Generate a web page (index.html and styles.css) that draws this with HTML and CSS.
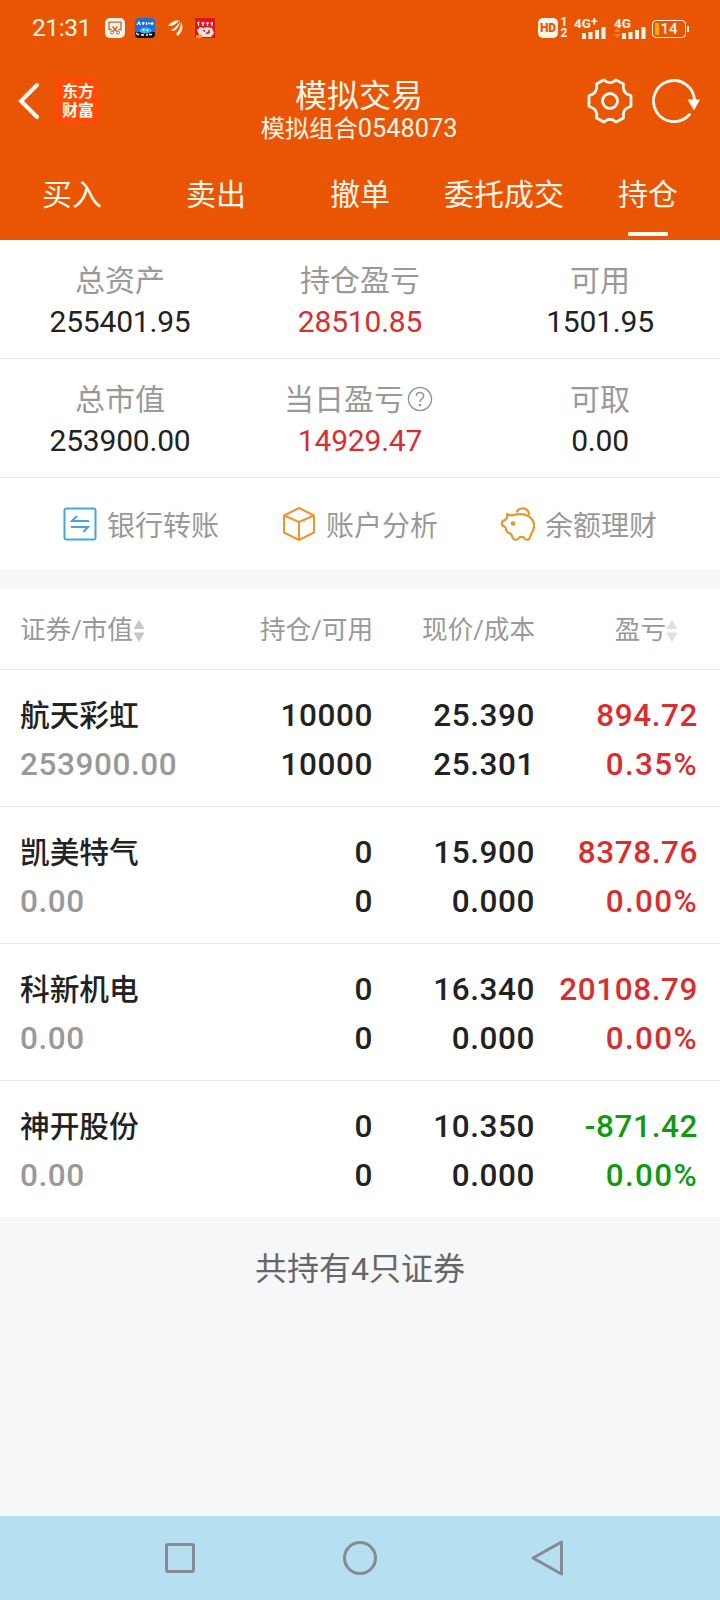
FILE: index.html
```html
<!DOCTYPE html>
<html lang="zh-CN">
  <head>
    <meta charset="utf-8">
    <meta name="viewport" content="width=device-width, initial-scale=1.0">
    <title>模拟交易</title>
    <link rel="stylesheet" href="styles.css">
  </head>
  <body>
    <header class="header">
      <!-- 状态栏 -->
      <div class="status">
        <span class="time">21:31</span>
        <svg class="s-icon" width="20" height="20" viewBox="0 0 20 20">
          <rect width="20" height="20" rx="5" fill="#fff6ea"/>
          <path d="M6.500 11.500H4V4.200H16V11.500H13.500M7.500 8.500l4.500 5M12.500 8.500L8 13.500" fill="none" stroke="#c4622a" stroke-width="1.3"/>
          <circle cx="7" cy="14.500" r="1.500" fill="none" stroke="#c4622a"/>
          <circle cx="13" cy="14.500" r="1.500" fill="none" stroke="#c4622a"/>
        </svg>
        <svg class="s-icon" width="20" height="20" viewBox="0 0 20 20">
          <rect width="20" height="20" rx="4" fill="#1c70d8"/>
          <path d="M0 14h20v2a4 4 0 0 1-4 4H4a4 4 0 0 1-4-4z" fill="#0b1724"/>
          <path d="M2 7l2-3 1.500 3M7 5h2.500M8.300 4v3M11.500 4v3M13 5.500h2M17 4v3M18.500 5.500h-3" stroke="#fff" stroke-width="1.300" fill="none"/>
          <ellipse cx="10.500" cy="12.500" rx="6" ry="3" fill="#3ab4f0"/>
          <circle cx="8.500" cy="12" r="1" fill="#fff"/>
          <circle cx="12.500" cy="12" r="1" fill="#fff"/>
          <path d="M1 15l3 2M6 17h3M11 17h2M14 16.500h3" stroke="#fff" stroke-width="1.500"/>
        </svg>
        <svg class="s-icon" width="20" height="20" viewBox="0 0 20 20">
          <path d="M3 8C6 4 9 2.500 14 2 12 6 8 8.500 3 8zM6 12c4-1.500 7-4.500 9-9.500 0 5-3 9.500-7 10.500zM11 16c3-3 5-7 5-12 3 5 1 10-3 14z" fill="#fff6ea"/>
        </svg>
        <svg class="s-icon" width="20" height="20" viewBox="0 0 20 20">
          <rect width="20" height="20" fill="#e0131e"/>
          <path d="M2 5l2.500-1M3.500 4v4M6.500 5h3M8 4v4M11 5h3M12.500 4v4M15.500 5H18M17 4v4" stroke="#fff" stroke-width="1.200"/>
          <path d="M2 12l3-3 3 1 4-1 5 1 2 5-3 4H5z" fill="#fbdcd8"/>
          <path d="M8 12l2 1.500M14 12v2.500l-3 1" stroke="#b11c28" stroke-width="1.400" fill="none"/>
          <rect x="1" y="17" width="6" height="3" fill="#f39a1c"/>
        </svg>
        <div class="status-right">
          <span class="hd">HD</span>
          <span class="sim"><i>1</i><i>2</i></span>
          <span class="signal signal-plus">
            <b>4G<sup>+</sup></b>
            <svg width="24" height="12" viewBox="0 0 24 12" fill="#fff6ea"><path d="M0 6h4v6H0zM6.500 5h4v7h-4zM13 3h4v9h-4zM19.500 0h4v12h-4z"/></svg>
          </span>
          <span class="signal">
            <b>4G</b>
            <svg width="32" height="12" viewBox="0 0 32 12" fill="#fff6ea"><path d="M0 5l3.500-4L7 5zM0 7l3.500 4L7 7z" fill="#ff7a3a"/><path d="M8 6h4v6H8zM14.500 5h4v7h-4zM21 3h4v9h-4zM27.500 0h4v12h-4z"/></svg>
          </span>
          <span class="battery">14</span>
        </div>
      </div>

      <!-- 标题栏 -->
      <div class="navbar">
        <div class="nav-left">
          <svg width="22" height="38" viewBox="0 0 22 38"><path d="M20 3L4 19l16 16" fill="none" stroke="#fffaf2" stroke-width="4" stroke-linecap="round"/></svg>
          <div class="logo"><span>东方</span><span>财富</span></div>
        </div>
        <div class="nav-title">
          <h1>模拟交易</h1>
          <p>模拟组合<span>0548073</span></p>
        </div>
        <div class="nav-right">
          <svg width="46" height="46" viewBox="0 0 46 46" fill="none" stroke="#fffaf2" stroke-width="2.800" stroke-linejoin="round">
            <path d="M15.500 2.500L17 2q6 5.500 12 0l7.500 4q-1.500 9 6 11l1.500 1v10l-1.500 1q-7.500 2-6 11L29 44q-6-5.500-12 0l-7.500-4q1.500-9-6-11L2 28V18l1.500-1q7.500-2 6-11z"/>
            <circle cx="23" cy="23" r="7.500"/>
          </svg>
          <svg width="48" height="46" viewBox="0 0 48 46">
            <path d="M37.500 36.500A20.500 20.500 0 1 1 42.500 23" fill="none" stroke="#fffaf2" stroke-width="2.800" stroke-linecap="round"/>
            <path d="M35.500 21.500h12.500l-6 11z" fill="#fffaf2"/>
          </svg>
        </div>
      </div>

      <nav class="tabs">
        <a>买入</a>
        <a>卖出</a>
        <a>撤单</a>
        <a>委托成交</a>
        <a class="active">持仓</a>
      </nav>
    </header>

    <!-- 资产概览 -->
    <section class="summary">
      <div class="item"><label>总资产</label><strong>255401.95</strong></div>
      <div class="item"><label>持仓盈亏</label><strong class="red">28510.85</strong></div>
      <div class="item"><label>可用</label><strong>1501.95</strong></div>
    </section>
    <section class="summary">
      <div class="item"><label>总市值</label><strong>253900.00</strong></div>
      <div class="item">
        <label>当日盈亏<svg class="help" width="26" height="26" viewBox="0 0 26 26" fill="none" stroke="#999" stroke-width="1.500"><circle cx="13" cy="13" r="11.500"/><path d="M9.300 10.200c0-5 7.400-4.700 7.400-.4 0 3-3.700 3.200-3.700 6.200"/><circle cx="13" cy="19" r=".6"/></svg></label>
        <strong class="red">14929.47</strong>
      </div>
      <div class="item"><label>可取</label><strong>0.00</strong></div>
    </section>

    <section class="links">
      <a>
        <svg width="34" height="34" viewBox="0 0 34 34" fill="none" stroke="#43a5e4" stroke-width="2">
          <rect x="1.500" y="1.500" width="31" height="31" rx="2"/>
          <path d="M14 9l-5 5h17M8 20h17l-4.500 5"/>
        </svg>
        银行转账
      </a>
      <a>
        <svg width="34" height="34" viewBox="0 0 34 34" fill="none" stroke="#f0952a" stroke-width="2" stroke-linejoin="round">
          <path d="M17 1l15 7.500v17L17 33 2 25.500v-17zM2 8.500l15 6.500 15-6.500M17 15v18"/>
        </svg>
        账户分析
      </a>
      <a>
        <svg width="34" height="34" viewBox="0 0 34 34" fill="none" stroke="#e8962e" stroke-width="2.200" stroke-linejoin="round" stroke-linecap="round">
          <path d="M6 7l5 1.500C18 6.500 24 7 28 9.500c5 3.500 6 9 4 14-1 3-3 4.500-3.500 8-.2 1.500-4.500 1.500-5 0l-1-1.500h-4l-1 1.500c-.5 1.500-5 1.500-5.500 0L10 27l-4-2-1.500-4.500L1 18v-3l4-3 1.500-2z"/>
          <path d="M16 4.500c2-4.500 11-4.500 12 2.500"/>
          <circle cx="12" cy="16.500" r="1.200" fill="#e8962e"/>
        </svg>
        余额理财
      </a>
    </section>

    <!-- 持仓列表 -->
    <main class="holdings">
      <div class="row head">
        <div class="sort">证券/市值<svg width="12" height="24" viewBox="0 0 12 24" fill="#c8c8c8"><path d="M.5 10L6 .5 11.500 10zM.5 13.500L6 23l5.500-9.500z"/></svg></div>
        <div>持仓/可用</div>
        <div>现价/成本</div>
        <div class="sort sort-end">盈亏<svg width="12" height="24" viewBox="0 0 12 24" fill="#dfdfdf"><path d="M.5 10L6 .5 11.500 10zM.5 13.500L6 23l5.500-9.500z"/></svg></div>
      </div>
      <div class="row">
        <div><b>航天彩虹</b><span class="value">253900.00</span></div>
        <div>10000<br>10000</div>
        <div>25.390<br>25.301</div>
        <div class="red">894.72<br><span class="rate">0.35%</span></div>
      </div>
      <div class="row">
        <div><b>凯美特气</b><span class="value">0.00</span></div>
        <div>0<br>0</div>
        <div>15.900<br>0.000</div>
        <div class="red">8378.76<br><span class="rate">0.00%</span></div>
      </div>
      <div class="row">
        <div><b>科新机电</b><span class="value">0.00</span></div>
        <div>0<br>0</div>
        <div>16.340<br>0.000</div>
        <div class="red">20108.79<br><span class="rate">0.00%</span></div>
      </div>
      <div class="row">
        <div><b>神开股份</b><span class="value">0.00</span></div>
        <div>0<br>0</div>
        <div>10.350<br>0.000</div>
        <div class="green">-871.42<br><span class="rate">0.00%</span></div>
      </div>
    </main>
    <p class="total">共持有4只证券</p>

    <!-- 系统导航键 -->
    <footer class="sysbar">
      <svg width="36" height="36" viewBox="0 0 36 36"><rect x="4.500" y="4.500" width="27" height="27" rx="1.500"/></svg>
      <svg width="36" height="36" viewBox="0 0 36 36"><circle cx="18" cy="18" r="15.500"/></svg>
      <svg class="back" width="36" height="36" viewBox="0 0 36 36"><path d="M32.500 2v32L4 18z"/></svg>
    </footer>
  </body>
</html>
```
FILE: styles.css
```css
* {
  box-sizing: border-box;
}
body {
  margin: 0;
  height: 1600px;
  display: flex;
  flex-direction: column;
  background: #f6f7f9;
  color: #222;
  font-family: Roboto, "Noto Sans CJK SC", sans-serif;
}
.red {
  color: #d92e2e;
}
.green {
  color: #109a10;
}

/* 顶部 */
.header {
  height: 240px;
  background: #ea5504;
  color: #fff6ea;
}
.status {
  height: 56px;
  padding: 0 34px 0 32px;
  display: flex;
  align-items: center;
}
.time {
  width: 73px;
  font-size: 24.5px;
  letter-spacing: -0.4px;
  line-height: 56px;
  white-space: nowrap;
}
.s-icon {
  margin-right: 10px;
}
.status-right {
  margin-left: auto;
  display: flex;
  align-items: center;
}
.hd {
  width: 20px;
  height: 20px;
  border-radius: 5px;
  background: #fff6ea;
  color: #ea5504;
  font-size: 12px;
  font-weight: 900;
  line-height: 20px;
  text-align: center;
}
.sim {
  width: 10px;
  margin: 0 5px 0 1px;
  display: flex;
  flex-direction: column;
  text-align: center;
}
.sim i {
  font-size: 12px;
  font-style: normal;
  font-weight: 700;
  line-height: 11px;
}
.signal {
  width: 32px;
  height: 22px;
  display: flex;
  flex-direction: column;
  align-items: flex-end;
}
.signal-plus {
  margin-right: 8px;
}
.signal b {
  align-self: flex-start;
  height: 10px;
  font-size: 13.5px;
  line-height: 12px;
  white-space: nowrap;
}
.signal sup {
  font-size: 12px;
  line-height: 0;
  vertical-align: 2px;
}
.battery {
  position: relative;
  width: 34px;
  height: 18px;
  margin: 2px 0 0 6px;
  border: 1.5px solid #fff6ea;
  border-radius: 4px;
  font-size: 15px;
  font-weight: 500;
  line-height: 16px;
  text-align: center;
}
.battery::before {
  content: "";
  position: absolute;
  left: 2px;
  top: 2px;
  width: 4px;
  height: 12px;
  background: #ffa800;
}
.battery::after {
  content: "";
  position: absolute;
  right: -4px;
  top: 5px;
  width: 2px;
  height: 6px;
  background: #fff6ea;
}

.navbar {
  height: 92px;
  padding: 0 20px 0 17px;
  display: grid;
  grid-template-columns: 130px 1fr 129px;
}
.nav-left {
  display: flex;
  align-items: center;
  gap: 17px;
  padding-bottom: 2px;
}
.logo {
  width: 44px;
  height: 46px;
  display: flex;
  flex-direction: column;
  align-items: center;
  justify-content: center;
  border-radius: 6px;
  background: #ff4a08;
  font-size: 16px;
  font-weight: 700;
  line-height: 19px;
}
.nav-title {
  padding-top: 21px;
  text-align: center;
}
.nav-title h1 {
  margin: 0;
  font-size: 32px;
  font-weight: 400;
  line-height: 38px;
}
.nav-title p {
  margin: 0;
  font-size: 24.3px;
  line-height: 28px;
}
.nav-title span {
  font-size: 25.3px;
}
.nav-right {
  display: flex;
  align-items: center;
  justify-content: flex-end;
  gap: 19px;
  padding-bottom: 2px;
}

.tabs {
  height: 92px;
  padding-top: 1px;
  display: grid;
  grid-template-columns: repeat(5, 1fr);
  text-align: center;
  font-size: 30px;
}
.tabs a {
  line-height: 91px;
}
.tabs .active::after {
  content: "";
  display: block;
  width: 40px;
  height: 4px;
  margin: -8px auto 0;
  border-radius: 1px;
  background: #fffaf2;
}

/* 资产概览 */
.summary {
  height: 119px;
  padding-top: 21px;
  display: grid;
  grid-template-columns: repeat(3, 1fr);
  background: #fff;
  border-bottom: 1px solid #e9e9e9;
}
.item {
  display: flex;
  flex-direction: column;
  align-items: center;
}
.item label {
  display: flex;
  align-items: center;
  height: 40px;
  font-size: 30px;
  line-height: 40px;
  color: #999;
}
.item strong {
  font-size: 30px;
  font-weight: 400;
  letter-spacing: -0.2px;
  line-height: 41px;
}
.help {
  margin: 0 3px 3px;
}

.links {
  height: 92px;
  display: flex;
  justify-content: center;
  gap: 63px;
  background: #fff;
  color: #999;
  font-size: 28px;
}
.links a {
  display: flex;
  align-items: center;
  gap: 10px;
}

/* 持仓列表 */
.holdings {
  margin-top: 19px;
  background: #fff;
}
.row {
  height: 137px;
  padding: 21px 22px 0 20px;
  display: grid;
  grid-template-columns: 193px 160px 162px 163px;
  border-bottom: 1px solid #e9e9e9;
  font-size: 31.5px;
  font-weight: 500;
  letter-spacing: 0.6px;
  line-height: 49px;
  text-align: right;
}
.row:last-child {
  height: 136px;
  border-bottom: 0;
}
.row > :first-child {
  text-align: left;
  white-space: nowrap;
}
.row b {
  display: block;
  height: 49px;
  font-size: 29.7px;
  font-weight: 500;
  letter-spacing: 0;
}
.value {
  color: #999;
}
.rate {
  letter-spacing: 1.3px;
}
.head {
  height: 81px;
  padding-top: 3px;
  align-items: center;
  color: #999;
  font-size: 25.6px;
  font-weight: 400;
  letter-spacing: 0;
}
.sort {
  display: flex;
  align-items: center;
}
.sort-end {
  justify-content: flex-end;
  padding-right: 20px;
}

.total {
  margin: 0;
  padding-top: 28px;
  color: #666;
  font-size: 32px;
  line-height: 48px;
  text-align: center;
}

/* 系统导航键 */
.sysbar {
  height: 84px;
  margin-top: auto;
  padding: 0 90px;
  display: grid;
  grid-template-columns: repeat(3, 1fr);
  align-items: center;
  justify-items: center;
  background: #b6dff2;
}
.sysbar svg {
  fill: none;
  stroke: #858b8e;
  stroke-width: 3;
  stroke-linejoin: round;
}
.sysbar .back {
  margin-left: 14px;
}
```
